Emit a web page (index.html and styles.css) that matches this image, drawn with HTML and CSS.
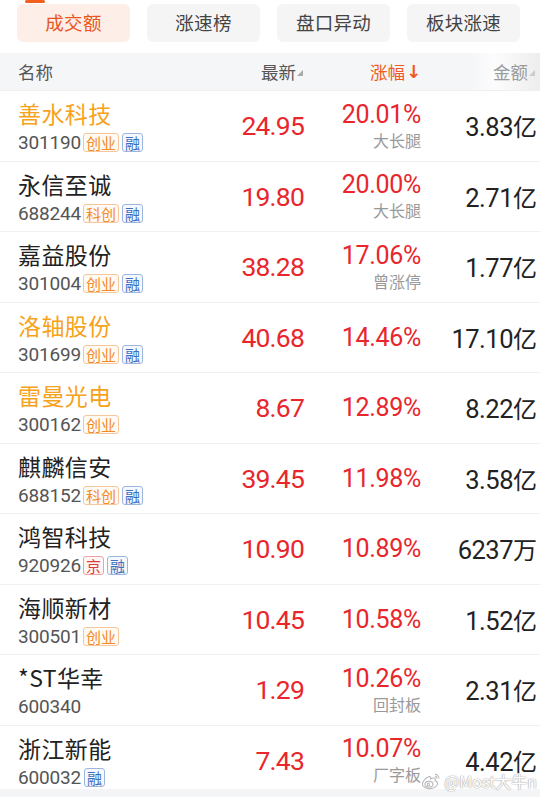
FILE: index.html
```html
<!DOCTYPE html>
<html lang="zh">
<head>
<meta charset="utf-8">
<link rel="stylesheet" href="styles.css">
</head>
<body>
<div class="page">
  <nav class="tabs">
    <div class="tab active"><span class="tab-bar"></span>成交额</div>
    <div class="tab">涨速榜</div>
    <div class="tab">盘口异动</div>
    <div class="tab">板块涨速</div>
  </nav>

  <div class="thead">
    <div class="th th-name">名称</div>
    <div class="th th-price">最新<span class="tri"></span></div>
    <div class="th th-pct">涨幅<span class="arrow">↓</span></div>
    <div class="th th-amt">金额<span class="tri"></span></div>
  </div>

  <div class="list">
    <div class="row">
      <div class="name-cell"><div class="name hot">善水科技</div><div class="code">301190<span class="tag cy">创业</span><span class="tag rz">融</span></div></div>
      <div class="price">24.95</div>
      <div class="pct-cell"><div class="pct">20.01%</div><div class="note">大长腿</div></div>
      <div class="amt">3.83<span class="unit">亿</span></div>
    </div>
    <div class="row">
      <div class="name-cell"><div class="name">永信至诚</div><div class="code">688244<span class="tag cy">科创</span><span class="tag rz">融</span></div></div>
      <div class="price">19.80</div>
      <div class="pct-cell"><div class="pct">20.00%</div><div class="note">大长腿</div></div>
      <div class="amt">2.71<span class="unit">亿</span></div>
    </div>
    <div class="row">
      <div class="name-cell"><div class="name">嘉益股份</div><div class="code">301004<span class="tag cy">创业</span><span class="tag rz">融</span></div></div>
      <div class="price">38.28</div>
      <div class="pct-cell"><div class="pct">17.06%</div><div class="note">曾涨停</div></div>
      <div class="amt">1.77<span class="unit">亿</span></div>
    </div>
    <div class="row">
      <div class="name-cell"><div class="name hot">洛轴股份</div><div class="code">301699<span class="tag cy">创业</span><span class="tag rz">融</span></div></div>
      <div class="price">40.68</div>
      <div class="pct-cell"><div class="pct">14.46%</div></div>
      <div class="amt">17.10<span class="unit">亿</span></div>
    </div>
    <div class="row">
      <div class="name-cell"><div class="name hot">雷曼光电</div><div class="code">300162<span class="tag cy">创业</span></div></div>
      <div class="price">8.67</div>
      <div class="pct-cell"><div class="pct">12.89%</div></div>
      <div class="amt">8.22<span class="unit">亿</span></div>
    </div>
    <div class="row">
      <div class="name-cell"><div class="name">麒麟信安</div><div class="code">688152<span class="tag cy">科创</span><span class="tag rz">融</span></div></div>
      <div class="price">39.45</div>
      <div class="pct-cell"><div class="pct">11.98%</div></div>
      <div class="amt">3.58<span class="unit">亿</span></div>
    </div>
    <div class="row">
      <div class="name-cell"><div class="name">鸿智科技</div><div class="code">920926<span class="tag bj">京</span><span class="tag rz">融</span></div></div>
      <div class="price">10.90</div>
      <div class="pct-cell"><div class="pct">10.89%</div></div>
      <div class="amt">6237<span class="unit">万</span></div>
    </div>
    <div class="row">
      <div class="name-cell"><div class="name">海顺新材</div><div class="code">300501<span class="tag cy">创业</span></div></div>
      <div class="price">10.45</div>
      <div class="pct-cell"><div class="pct">10.58%</div></div>
      <div class="amt">1.52<span class="unit">亿</span></div>
    </div>
    <div class="row">
      <div class="name-cell"><div class="name">*ST华幸</div><div class="code">600340</div></div>
      <div class="price">1.29</div>
      <div class="pct-cell"><div class="pct">10.26%</div><div class="note">回封板</div></div>
      <div class="amt">2.31<span class="unit">亿</span></div>
    </div>
    <div class="row">
      <div class="name-cell"><div class="name">浙江新能</div><div class="code">600032<span class="tag rz">融</span></div></div>
      <div class="price">7.43</div>
      <div class="pct-cell"><div class="pct">10.07%</div><div class="note">厂字板</div></div>
      <div class="amt">4.42<span class="unit">亿</span></div>
    </div>
  </div>

  <div class="footer-strip"></div>

  <div class="watermark">
    <svg class="wb" width="20" height="17" viewBox="0 0 20 17" fill="none" stroke="#b8b8b8" stroke-width="1.1">
      <path d="M8.2 3.6C5 4.8 1.2 8.2 1.4 11.2c.2 3 3.8 4.6 7.6 4.4 4.4-.2 8-2.6 7.6-5.4-.2-1.6-1.6-2.2-2.6-2.4.6-1.4.4-2.600-.8-2.8-1.2-.2-2.8.6-3.6 1 .4-1.4.2-2.6-1.4-2.4z"/>
      <ellipse cx="8" cy="11.2" rx="4" ry="2.8"/>
      <circle cx="7.4" cy="11.4" r="1.1"/>
      <path d="M14 1.4c2.2 0 4 1.8 4 4M14 3.4c1.1 0 2 .9 2 2"/>
    </svg>
    <span class="wm-text">@Most大牛n</span>
  </div>
</div>
</body>
</html>
```

FILE: styles.css
```css
* { box-sizing: border-box; }

html, body {
  margin: 0;
  padding: 0;
  background: #ffffff;
}

body {
  font-family: Roboto, "Noto Sans CJK SC", sans-serif;
  color: #222;
}

.page {
  position: relative;
  width: 540px;
  height: 797px;
  overflow: hidden;
  background: #fff;
}

/* tabs */
.tabs {
  display: flex;
  gap: 17px;
  padding: 4px 0 0 17px;
  height: 53px;
}

.tab {
  position: relative;
  width: 113px;
  height: 38px;
  border-radius: 6px;
  background: #f5f5f6;
  color: #444;
  font-family: "Noto Sans CJK SC", sans-serif;
  font-size: 18.5px;
  display: flex;
  align-items: center;
  justify-content: center;
  padding-bottom: 2px;
  letter-spacing: 0.3px;
}

.tab.active {
  background: #fdeee7;
  color: #e8561c;
}

.tab-bar {
  position: absolute;
  left: 8px;
  top: -4px;
  width: 20px;
  height: 3px;
  border-radius: 2px;
  background: #f2601e;
}

/* header */
.thead {
  position: relative;
  display: grid;
  grid-template-columns: 182px 104px 117px 116px;
  padding: 0 3px 0 18px;
  height: 38px;
  align-items: center;
  background: #f5f6f8;
  border-bottom: 1px solid #eeeff1;
  font-family: "Noto Sans CJK SC", sans-serif;
  font-size: 17.5px;
  color: #555;
}

.thead::after {
  content: "";
  position: absolute;
  right: 0;
  top: 0;
  bottom: 0;
  width: 70px;
  background: linear-gradient(90deg, rgba(255,255,255,0) 0%, rgba(255,255,255,0.7) 35%, rgba(236,236,236,0.9) 100%);
}

.th { display: flex; align-items: center; }
.th-price, .th-pct, .th-amt { justify-content: flex-end; }
.th-price { padding-right: 1px; }
.th-pct { color: #f05a22; }
.th-amt { color: #9a9a9a; padding-right: 2px; position: relative; z-index: 1; }

.arrow {
  font-family: "DejaVu Sans", sans-serif;
  font-size: 18px;
  margin-left: 1px;
  font-weight: bold;
}

.tri {
  width: 0;
  height: 0;
  border-left: 6px solid transparent;
  border-bottom: 6px solid #aaa;
  align-self: flex-end;
  margin: 0 0 8px 1px;
}

.th-amt .tri { border-bottom-color: #ccc; }

/* rows */
.row {
  display: grid;
  grid-template-columns: 182px 104px 117px 116px;
  padding: 0 3px 0 18px;
  height: 70.5px;
  align-items: center;
  border-bottom: 1px solid #f1f1f3;
}

.name-cell {
  display: flex;
  flex-direction: column;
  gap: 6px;
  padding-top: 1px;
}

.name {
  font-family: "Noto Sans CJK SC", sans-serif;
  font-size: 23px;
  line-height: 27px;
  color: #222;
  letter-spacing: 0.4px;
}

.name.hot { color: #f7a21b; }

.code {
  display: flex;
  align-items: center;
  height: 19px;
  font-size: 19px;
  color: #555;
  letter-spacing: -0.2px;
}

.tag {
  display: inline-flex;
  align-items: center;
  justify-content: center;
  height: 19px;
  padding: 0 2px;
  margin-left: 3px;
  border: 1px solid;
  border-radius: 3px;
  font-family: "Noto Sans CJK SC", sans-serif;
  font-size: 15px;
  line-height: 1;
  letter-spacing: 0;
}

.tag.cy { color: #f28a2a; border-color: #f6c79c; background: #fffaf4; margin-left: 2px; }
.tag.rz { color: #3d6fc0; border-color: #9db6dd; background: #f5f8fd; }
.tag.bj { color: #e03b3b; border-color: #eea3a3; background: #fff6f6; margin-left: 2px; }

.price {
  text-align: right;
  font-size: 26.5px;
  color: #e8262c;
  letter-spacing: -0.8px;
}

.pct-cell {
  display: flex;
  flex-direction: column;
  align-items: flex-end;
}

.pct {
  font-size: 25px;
  line-height: 25px;
  color: #e8262c;
  letter-spacing: -0.3px;
}

.note {
  margin-top: 3px;
  font-family: "Noto Sans CJK SC", sans-serif;
  font-size: 16px;
  line-height: 20px;
  color: #999;
}

.amt {
  text-align: right;
  font-size: 25.5px;
  color: #222;
  letter-spacing: -0.5px;
}

.unit {
  font-family: "Noto Sans CJK SC", sans-serif;
  font-size: 24px;
  letter-spacing: 0;
}

/* bottom */
.footer-strip {
  position: absolute;
  left: 0;
  right: 0;
  bottom: 0;
  height: 8px;
  background: #f4f5f7;
}

.watermark {
  position: absolute;
  right: 3px;
  bottom: 7px;
  display: flex;
  align-items: center;
  gap: 3px;
}

.wm-text {
  font-family: "Noto Sans CJK SC", sans-serif;
  font-size: 16px;
  line-height: 18px;
  color: #fff;
  text-shadow: 0 0 1px #aaa, 0 0 1px #aaa, 0 0 2px #ccc;
}
```
